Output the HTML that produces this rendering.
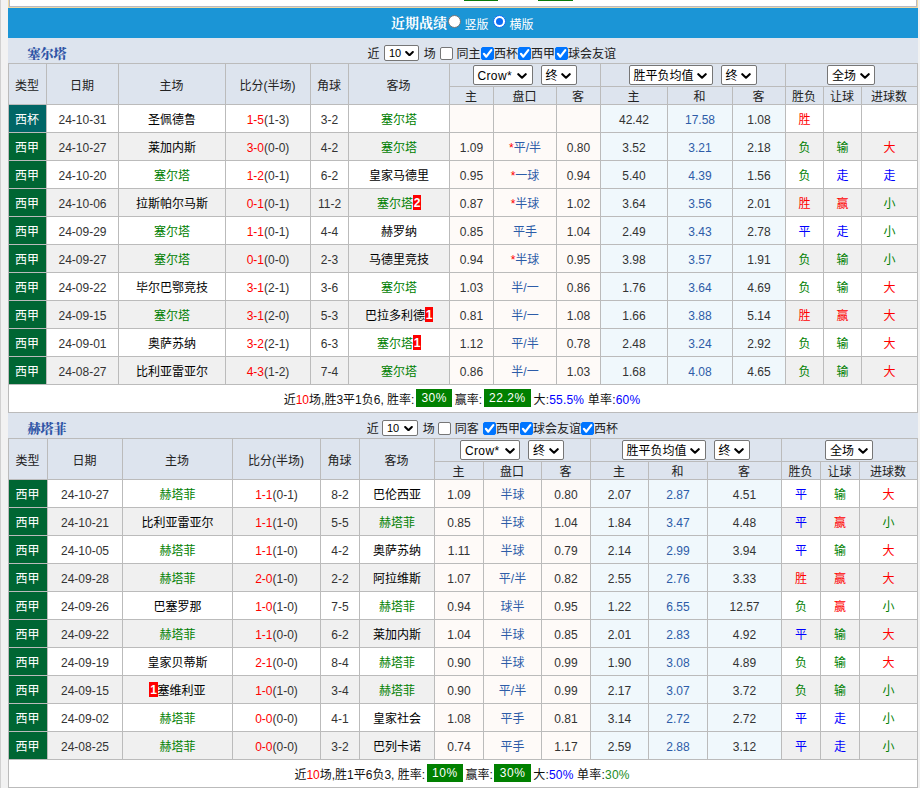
<!DOCTYPE html><html lang="zh-CN"><head><meta charset="utf-8"><title>近期战绩</title><style>

html,body{margin:0;padding:0}
body{width:920px;height:788px;overflow:hidden;background:#f2f2f2;position:relative;font-family:"Liberation Sans","Noto Sans CJK SC",sans-serif;font-size:12px;color:#333}
#edge{position:absolute;left:0;top:0;width:1px;height:788px;background:#d0d0d0}
#topbox{position:absolute;left:9px;top:-11px;width:906px;height:16px;background:#fff;border:1px solid #b9b9c4;outline:1px solid #eed9a4}
#topbox i{position:absolute;top:10px;height:1px;background:#0a7a0a}
#bar{position:absolute;left:8px;top:8px;width:910px;height:30px;background:#1b95d6;color:#fff}
#bar .ttl{position:absolute;left:383px;top:6px;font:bold 14px/20px "Liberation Serif","Noto Serif CJK SC",serif;letter-spacing:0}
#bar .rd{position:absolute;top:7px;width:11px;height:11px;border-radius:50%;background:#fff;border:1px solid #767676}
#bar .rd.on{border:1px solid #0b6cf5;box-shadow:none}
#bar .rd.on:after{content:"";position:absolute;left:2px;top:2px;width:7px;height:7px;border-radius:50%;background:#0b6cf5}
#bar .o{position:absolute;top:9px;font:12px/16px "Liberation Sans","Noto Sans CJK SC",sans-serif}
.strip{position:absolute;left:8px;width:910px;height:25px;background:#dde4ee}
.strip .tn{position:absolute;top:8px;font:900 13px/16px "Liberation Serif","Noto Serif CJK SC",serif;color:#2f55a6}
.strip .lb{position:absolute;top:8px;line-height:16px;font-size:12px;color:#222}
.cb{position:absolute;top:9px;width:11px;height:11px;border:1px solid #767676;border-radius:2px;background:#fff}
.cb.on{background:#0075ff;border-color:#0075ff}
.cb svg{position:absolute;left:-1px;top:-1px}
.sel{display:inline-block;box-sizing:border-box;height:20px;border:1px solid #767676;border-radius:2px;background:#fff;position:relative;vertical-align:middle;margin:0 4px;text-align:left;color:#000;font-size:12px;line-height:17px}
.sel span{position:absolute;left:4px;top:2px;white-space:nowrap}
.sel span.lat{letter-spacing:.35px}
.sel svg{position:absolute;right:4.5px;top:6.5px}
.sel.s2{position:absolute;top:7px;height:16px;margin:0;font-size:11px;line-height:14px}
.sel.s2 svg{top:4.6px;right:4.2px}
.sel.s2 span{top:0;left:4px}
table.t{position:absolute;left:8px;border-collapse:separate;border-spacing:0;table-layout:fixed;width:910px;border-left:1px solid #bbb;border-top:1px solid #bbb;background:#fff}
.t th,.t td{box-sizing:border-box;border-right:1px solid #bbb;border-bottom:1px solid #bbb;padding:0;text-align:center;font-weight:normal;white-space:nowrap;overflow:hidden;font-size:12px}
.t th{background:#dde4ee;color:#222}
.t tr.h1{height:23px}
.t tr.h2{height:18px}
.t tr.h2 th{line-height:13px;padding-top:4px}
.t th{padding-right:1px}
.t td{height:28px;line-height:23px;padding-top:4px;color:#000}
.t td.n{color:#333}
.t tr.a td{background:#f0f0f0}
.t td.tp{padding-right:1px;color:#fff;background:#006633 !important}
.t td.tp.cup{background:#006666 !important}
.t td.od{background:#fefaf8 !important}
.t td.eu{background:#f0f8fc !important}
.t td.hd,.t td.dr{color:#2d5ca8}
i.g{font-style:normal;color:#008000}
.r,.t td.r{color:#f00}.gn,.t td.gn{color:#008000}.bl,.t td.bl{color:#00f}.gn2{color:#228b22}
b.st{color:#f00;font-weight:normal}
b.rc{background:#f00;color:#fff;font-weight:bold;font-size:12px;padding:2px .7px 0;line-height:13px;display:inline-block;position:relative;top:-1px}
.t tr.sum td{background:#fff;text-align:center;padding-left:0;padding-right:2px;padding-top:3px;line-height:24px;height:28px;color:#111}
.tl{letter-spacing:.2px}
.bx{display:inline-block;background:#008000;color:#fff;padding:1px 5.5px 0;line-height:17px;margin:0 -1px 0 1.5px;position:relative;top:-2px;letter-spacing:.5px}

</style></head><body>
<div id="edge"></div>
<div id="topbox"><i style="left:454px;width:34px"></i><i style="left:528px;width:35px"></i></div>
<div id="bar"><span class="ttl">近期战绩</span><span class="rd" style="left:439.5px"></span><span class="o" style="left:456.5px">竖版</span><span class="rd on" style="left:485px"></span><span class="o" style="left:501.5px">横版</span></div>
<div class="strip" style="top:38px"><span class="tn" style="left:19.5px">塞尔塔</span>
<span class="lb" style="left:359.6px">近</span>
<span class="sel s2" style="left:376.0px;width:35px"><span>10</span><svg viewBox="0 0 10 6" width="9" height="5.4"><path d="M1.3 1.2 L5 4.7 L8.7 1.2" fill="none" stroke="#000" stroke-width="2.3" stroke-linecap="round" stroke-linejoin="round"/></svg></span>
<span class="lb" style="left:415.7px">场</span>
<span class="cb" style="left:432.0px"></span>
<span class="lb" style="left:448.6px">同主</span>
<span class="cb on" style="left:473.0px"><svg viewBox="0 0 13 13" width="13" height="13"><path d="M2.9 6.8 L5.3 9.7 L10.3 3.1" fill="none" stroke="#fff" stroke-width="2.2" stroke-linecap="round" stroke-linejoin="round"/></svg></span>
<span class="lb" style="left:486.0px">西杯</span>
<span class="cb on" style="left:510.0px"><svg viewBox="0 0 13 13" width="13" height="13"><path d="M2.9 6.8 L5.3 9.7 L10.3 3.1" fill="none" stroke="#fff" stroke-width="2.2" stroke-linecap="round" stroke-linejoin="round"/></svg></span>
<span class="lb" style="left:523.0px">西甲</span>
<span class="cb on" style="left:547.0px"><svg viewBox="0 0 13 13" width="13" height="13"><path d="M2.9 6.8 L5.3 9.7 L10.3 3.1" fill="none" stroke="#fff" stroke-width="2.2" stroke-linecap="round" stroke-linejoin="round"/></svg></span>
<span class="lb" style="left:560.0px">球会友谊</span>
</div>
<table class="t" style="top:63px">
<colgroup><col style="width:38px"><col style="width:72px"><col style="width:107px"><col style="width:85px"><col style="width:38px"><col style="width:101px"><col style="width:44px"><col style="width:63px"><col style="width:44px"><col style="width:67px"><col style="width:65px"><col style="width:53px"><col style="width:38px"><col style="width:38px"><col style="width:56px"></colgroup>
<tr class="h1"><th rowspan=2>类型</th><th rowspan=2>日期</th><th rowspan=2>主场</th><th rowspan=2>比分(半场)</th><th rowspan=2>角球</th><th rowspan=2>客场</th>
<th colspan=3><span class="sel" style="width:60px"><span class="lat">Crow*</span><svg viewBox="0 0 10 6" width="10" height="6"><path d="M1.3 1.2 L5 4.7 L8.7 1.2" fill="none" stroke="#000" stroke-width="2.1" stroke-linecap="round" stroke-linejoin="round"/></svg></span><span class="sel" style="width:36px"><span>终</span><svg viewBox="0 0 10 6" width="10" height="6"><path d="M1.3 1.2 L5 4.7 L8.7 1.2" fill="none" stroke="#000" stroke-width="2.1" stroke-linecap="round" stroke-linejoin="round"/></svg></span></th><th colspan=3><span class="sel" style="width:84px"><span>胜平负均值</span><svg viewBox="0 0 10 6" width="10" height="6"><path d="M1.3 1.2 L5 4.7 L8.7 1.2" fill="none" stroke="#000" stroke-width="2.1" stroke-linecap="round" stroke-linejoin="round"/></svg></span><span class="sel" style="width:36px"><span>终</span><svg viewBox="0 0 10 6" width="10" height="6"><path d="M1.3 1.2 L5 4.7 L8.7 1.2" fill="none" stroke="#000" stroke-width="2.1" stroke-linecap="round" stroke-linejoin="round"/></svg></span></th><th colspan=3><span class="sel" style="width:48px"><span>全场</span><svg viewBox="0 0 10 6" width="10" height="6"><path d="M1.3 1.2 L5 4.7 L8.7 1.2" fill="none" stroke="#000" stroke-width="2.1" stroke-linecap="round" stroke-linejoin="round"/></svg></span></th></tr>
<tr class="h2"><th>主</th><th>盘口</th><th>客</th><th>主</th><th>和</th><th>客</th><th>胜负</th><th>让球</th><th>进球数</th></tr>
<tr class=""><td class="tp cup">西杯</td><td class="n">24-10-31</td><td>圣佩德鲁</td><td class="n"><span class="r">1-5</span>(1-3)</td><td class="n">3-2</td><td><i class=g>塞尔塔</i></td><td class="od n"></td><td class="od hd"></td><td class="od n"></td><td class="eu n">42.42</td><td class="eu dr n">17.58</td><td class="eu n">1.08</td><td class="r">胜</td><td class=""></td><td class=""></td></tr>
<tr class="a"><td class="tp lg">西甲</td><td class="n">24-10-27</td><td>莱加内斯</td><td class="n"><span class="r">3-0</span>(0-0)</td><td class="n">4-2</td><td><i class=g>塞尔塔</i></td><td class="od n">1.09</td><td class="od hd"><b class="st">*</b>平/半</td><td class="od n">0.80</td><td class="eu n">3.52</td><td class="eu dr n">3.21</td><td class="eu n">2.18</td><td class="gn">负</td><td class="gn">输</td><td class="r">大</td></tr>
<tr class=""><td class="tp lg">西甲</td><td class="n">24-10-20</td><td><i class=g>塞尔塔</i></td><td class="n"><span class="r">1-2</span>(0-1)</td><td class="n">6-2</td><td>皇家马德里</td><td class="od n">0.95</td><td class="od hd"><b class="st">*</b>一球</td><td class="od n">0.94</td><td class="eu n">5.40</td><td class="eu dr n">4.39</td><td class="eu n">1.56</td><td class="gn">负</td><td class="bl">走</td><td class="bl">走</td></tr>
<tr class="a"><td class="tp lg">西甲</td><td class="n">24-10-06</td><td>拉斯帕尔马斯</td><td class="n"><span class="r">0-1</span>(0-1)</td><td class="n">11-2</td><td><i class=g>塞尔塔</i><b class="rc">2</b></td><td class="od n">0.87</td><td class="od hd"><b class="st">*</b>半球</td><td class="od n">1.02</td><td class="eu n">3.64</td><td class="eu dr n">3.56</td><td class="eu n">2.01</td><td class="r">胜</td><td class="r">赢</td><td class="gn">小</td></tr>
<tr class=""><td class="tp lg">西甲</td><td class="n">24-09-29</td><td><i class=g>塞尔塔</i></td><td class="n"><span class="r">1-1</span>(0-1)</td><td class="n">4-4</td><td>赫罗纳</td><td class="od n">0.85</td><td class="od hd">平手</td><td class="od n">1.04</td><td class="eu n">2.49</td><td class="eu dr n">3.43</td><td class="eu n">2.78</td><td class="bl">平</td><td class="bl">走</td><td class="gn">小</td></tr>
<tr class="a"><td class="tp lg">西甲</td><td class="n">24-09-27</td><td><i class=g>塞尔塔</i></td><td class="n"><span class="r">0-1</span>(0-0)</td><td class="n">2-3</td><td>马德里竞技</td><td class="od n">0.94</td><td class="od hd"><b class="st">*</b>半球</td><td class="od n">0.95</td><td class="eu n">3.98</td><td class="eu dr n">3.57</td><td class="eu n">1.91</td><td class="gn">负</td><td class="gn">输</td><td class="gn">小</td></tr>
<tr class=""><td class="tp lg">西甲</td><td class="n">24-09-22</td><td>毕尔巴鄂竞技</td><td class="n"><span class="r">3-1</span>(2-1)</td><td class="n">3-6</td><td><i class=g>塞尔塔</i></td><td class="od n">1.03</td><td class="od hd">半/一</td><td class="od n">0.86</td><td class="eu n">1.76</td><td class="eu dr n">3.64</td><td class="eu n">4.69</td><td class="gn">负</td><td class="gn">输</td><td class="r">大</td></tr>
<tr class="a"><td class="tp lg">西甲</td><td class="n">24-09-15</td><td><i class=g>塞尔塔</i></td><td class="n"><span class="r">3-1</span>(2-0)</td><td class="n">5-3</td><td>巴拉多利德<b class="rc">1</b></td><td class="od n">0.81</td><td class="od hd">半/一</td><td class="od n">1.08</td><td class="eu n">1.66</td><td class="eu dr n">3.88</td><td class="eu n">5.14</td><td class="r">胜</td><td class="r">赢</td><td class="r">大</td></tr>
<tr class=""><td class="tp lg">西甲</td><td class="n">24-09-01</td><td>奥萨苏纳</td><td class="n"><span class="r">3-2</span>(2-1)</td><td class="n">6-3</td><td><i class=g>塞尔塔</i><b class="rc">1</b></td><td class="od n">1.12</td><td class="od hd">平/半</td><td class="od n">0.78</td><td class="eu n">2.48</td><td class="eu dr n">3.24</td><td class="eu n">2.92</td><td class="gn">负</td><td class="gn">输</td><td class="r">大</td></tr>
<tr class="a"><td class="tp lg">西甲</td><td class="n">24-08-27</td><td>比利亚雷亚尔</td><td class="n"><span class="r">4-3</span>(1-2)</td><td class="n">7-4</td><td><i class=g>塞尔塔</i></td><td class="od n">0.86</td><td class="od hd">半/一</td><td class="od n">1.03</td><td class="eu n">1.68</td><td class="eu dr n">4.08</td><td class="eu n">4.65</td><td class="gn">负</td><td class="gn">输</td><td class="r">大</td></tr>
<tr class="sum"><td colspan=15>近<span class="r">10</span>场,胜3平1负6, 胜率:<span class="bx">30%</span> 赢率:<span class="bx">22.2%</span> <span class="tl">大:<span class="bl">55.5%</span> 单率:<span class="bl">60%</span></span></td></tr>
</table>
<div class="strip" style="top:413px"><span class="tn" style="left:19.5px">赫塔菲</span>
<span class="lb" style="left:358.7px">近</span>
<span class="sel s2" style="left:374.0px;width:36px"><span>10</span><svg viewBox="0 0 10 6" width="9" height="5.4"><path d="M1.3 1.2 L5 4.7 L8.7 1.2" fill="none" stroke="#000" stroke-width="2.3" stroke-linecap="round" stroke-linejoin="round"/></svg></span>
<span class="lb" style="left:414.7px">场</span>
<span class="cb" style="left:430.0px"></span>
<span class="lb" style="left:446.8px">同客</span>
<span class="cb on" style="left:475.0px"><svg viewBox="0 0 13 13" width="13" height="13"><path d="M2.9 6.8 L5.3 9.7 L10.3 3.1" fill="none" stroke="#fff" stroke-width="2.2" stroke-linecap="round" stroke-linejoin="round"/></svg></span>
<span class="lb" style="left:488.0px">西甲</span>
<span class="cb on" style="left:512.0px"><svg viewBox="0 0 13 13" width="13" height="13"><path d="M2.9 6.8 L5.3 9.7 L10.3 3.1" fill="none" stroke="#fff" stroke-width="2.2" stroke-linecap="round" stroke-linejoin="round"/></svg></span>
<span class="lb" style="left:525.0px">球会友谊</span>
<span class="cb on" style="left:573.0px"><svg viewBox="0 0 13 13" width="13" height="13"><path d="M2.9 6.8 L5.3 9.7 L10.3 3.1" fill="none" stroke="#fff" stroke-width="2.2" stroke-linecap="round" stroke-linejoin="round"/></svg></span>
<span class="lb" style="left:586.0px">西杯</span>
</div>
<table class="t" style="top:438px">
<colgroup><col style="width:39px"><col style="width:75px"><col style="width:110px"><col style="width:88px"><col style="width:39px"><col style="width:75px"><col style="width:49px"><col style="width:58px"><col style="width:49px"><col style="width:58px"><col style="width:59px"><col style="width:74px"><col style="width:39px"><col style="width:39px"><col style="width:58px"></colgroup>
<tr class="h1"><th rowspan=2>类型</th><th rowspan=2>日期</th><th rowspan=2>主场</th><th rowspan=2>比分(半场)</th><th rowspan=2>角球</th><th rowspan=2>客场</th>
<th colspan=3><span class="sel" style="width:60px"><span class="lat">Crow*</span><svg viewBox="0 0 10 6" width="10" height="6"><path d="M1.3 1.2 L5 4.7 L8.7 1.2" fill="none" stroke="#000" stroke-width="2.1" stroke-linecap="round" stroke-linejoin="round"/></svg></span><span class="sel" style="width:36px"><span>终</span><svg viewBox="0 0 10 6" width="10" height="6"><path d="M1.3 1.2 L5 4.7 L8.7 1.2" fill="none" stroke="#000" stroke-width="2.1" stroke-linecap="round" stroke-linejoin="round"/></svg></span></th><th colspan=3><span class="sel" style="width:84px"><span>胜平负均值</span><svg viewBox="0 0 10 6" width="10" height="6"><path d="M1.3 1.2 L5 4.7 L8.7 1.2" fill="none" stroke="#000" stroke-width="2.1" stroke-linecap="round" stroke-linejoin="round"/></svg></span><span class="sel" style="width:36px"><span>终</span><svg viewBox="0 0 10 6" width="10" height="6"><path d="M1.3 1.2 L5 4.7 L8.7 1.2" fill="none" stroke="#000" stroke-width="2.1" stroke-linecap="round" stroke-linejoin="round"/></svg></span></th><th colspan=3><span class="sel" style="width:48px"><span>全场</span><svg viewBox="0 0 10 6" width="10" height="6"><path d="M1.3 1.2 L5 4.7 L8.7 1.2" fill="none" stroke="#000" stroke-width="2.1" stroke-linecap="round" stroke-linejoin="round"/></svg></span></th></tr>
<tr class="h2"><th>主</th><th>盘口</th><th>客</th><th>主</th><th>和</th><th>客</th><th>胜负</th><th>让球</th><th>进球数</th></tr>
<tr class=""><td class="tp lg">西甲</td><td class="n">24-10-27</td><td><i class=g>赫塔菲</i></td><td class="n"><span class="r">1-1</span>(0-1)</td><td class="n">8-2</td><td>巴伦西亚</td><td class="od n">1.09</td><td class="od hd">半球</td><td class="od n">0.80</td><td class="eu n">2.07</td><td class="eu dr n">2.87</td><td class="eu n">4.51</td><td class="bl">平</td><td class="gn">输</td><td class="r">大</td></tr>
<tr class="a"><td class="tp lg">西甲</td><td class="n">24-10-21</td><td>比利亚雷亚尔</td><td class="n"><span class="r">1-1</span>(1-0)</td><td class="n">5-5</td><td><i class=g>赫塔菲</i></td><td class="od n">0.85</td><td class="od hd">半球</td><td class="od n">1.04</td><td class="eu n">1.84</td><td class="eu dr n">3.47</td><td class="eu n">4.48</td><td class="bl">平</td><td class="r">赢</td><td class="gn">小</td></tr>
<tr class=""><td class="tp lg">西甲</td><td class="n">24-10-05</td><td><i class=g>赫塔菲</i></td><td class="n"><span class="r">1-1</span>(1-0)</td><td class="n">4-2</td><td>奥萨苏纳</td><td class="od n">1.11</td><td class="od hd">半球</td><td class="od n">0.79</td><td class="eu n">2.14</td><td class="eu dr n">2.99</td><td class="eu n">3.94</td><td class="bl">平</td><td class="gn">输</td><td class="r">大</td></tr>
<tr class="a"><td class="tp lg">西甲</td><td class="n">24-09-28</td><td><i class=g>赫塔菲</i></td><td class="n"><span class="r">2-0</span>(1-0)</td><td class="n">2-2</td><td>阿拉维斯</td><td class="od n">1.07</td><td class="od hd">平/半</td><td class="od n">0.82</td><td class="eu n">2.55</td><td class="eu dr n">2.76</td><td class="eu n">3.33</td><td class="r">胜</td><td class="r">赢</td><td class="r">大</td></tr>
<tr class=""><td class="tp lg">西甲</td><td class="n">24-09-26</td><td>巴塞罗那</td><td class="n"><span class="r">1-0</span>(1-0)</td><td class="n">7-5</td><td><i class=g>赫塔菲</i></td><td class="od n">0.94</td><td class="od hd">球半</td><td class="od n">0.95</td><td class="eu n">1.22</td><td class="eu dr n">6.55</td><td class="eu n">12.57</td><td class="gn">负</td><td class="r">赢</td><td class="gn">小</td></tr>
<tr class="a"><td class="tp lg">西甲</td><td class="n">24-09-22</td><td><i class=g>赫塔菲</i></td><td class="n"><span class="r">1-1</span>(0-0)</td><td class="n">6-2</td><td>莱加内斯</td><td class="od n">1.04</td><td class="od hd">半球</td><td class="od n">0.85</td><td class="eu n">2.01</td><td class="eu dr n">2.83</td><td class="eu n">4.92</td><td class="bl">平</td><td class="gn">输</td><td class="r">大</td></tr>
<tr class=""><td class="tp lg">西甲</td><td class="n">24-09-19</td><td>皇家贝蒂斯</td><td class="n"><span class="r">2-1</span>(0-0)</td><td class="n">8-4</td><td><i class=g>赫塔菲</i></td><td class="od n">0.90</td><td class="od hd">半球</td><td class="od n">0.99</td><td class="eu n">1.90</td><td class="eu dr n">3.08</td><td class="eu n">4.89</td><td class="gn">负</td><td class="gn">输</td><td class="r">大</td></tr>
<tr class="a"><td class="tp lg">西甲</td><td class="n">24-09-15</td><td><b class="rc">1</b>塞维利亚</td><td class="n"><span class="r">1-0</span>(1-0)</td><td class="n">3-4</td><td><i class=g>赫塔菲</i></td><td class="od n">0.90</td><td class="od hd">平/半</td><td class="od n">0.99</td><td class="eu n">2.17</td><td class="eu dr n">3.07</td><td class="eu n">3.72</td><td class="gn">负</td><td class="gn">输</td><td class="gn">小</td></tr>
<tr class=""><td class="tp lg">西甲</td><td class="n">24-09-02</td><td><i class=g>赫塔菲</i></td><td class="n"><span class="r">0-0</span>(0-0)</td><td class="n">4-1</td><td>皇家社会</td><td class="od n">1.08</td><td class="od hd">平手</td><td class="od n">0.81</td><td class="eu n">3.14</td><td class="eu dr n">2.72</td><td class="eu n">2.72</td><td class="bl">平</td><td class="bl">走</td><td class="gn">小</td></tr>
<tr class="a"><td class="tp lg">西甲</td><td class="n">24-08-25</td><td><i class=g>赫塔菲</i></td><td class="n"><span class="r">0-0</span>(0-0)</td><td class="n">3-2</td><td>巴列卡诺</td><td class="od n">0.74</td><td class="od hd">平手</td><td class="od n">1.17</td><td class="eu n">2.59</td><td class="eu dr n">2.88</td><td class="eu n">3.12</td><td class="bl">平</td><td class="bl">走</td><td class="gn">小</td></tr>
<tr class="sum"><td colspan=15>近<span class="r">10</span>场,胜1平6负3, 胜率:<span class="bx">10%</span> 赢率:<span class="bx">30%</span> <span class="tl">大:<span class="bl">50%</span> 单率:<span class="gn2">30%</span></span></td></tr>
</table>
</body></html>
